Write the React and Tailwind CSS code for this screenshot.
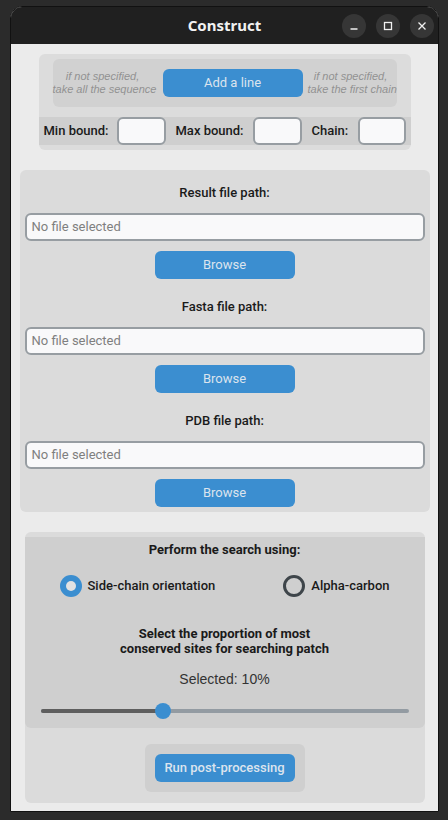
import React from "react";

const BLUE = "bg-[#3b8ed0]";

// Small entry used in the bounds row
const SmallEntry = ({ className = "" }) => (
  <div
    className={`h-[28px] rounded-[6px] border-2 border-[#979da2] bg-[#f9f9fa] ${className}`}
  ></div>
);

// One "label / entry / Browse" block of the file frame
const FileField = ({ label, first }) => (
  <div className="flex flex-col items-center">
    <div
      className={`${first ? "mt-[15px]" : "mt-[20px]"} h-[16px] text-[13px] leading-[16px] font-medium text-[#1a1a1a]`}
    >
      {label}
    </div>
    <div className="mt-[12px] flex h-[28px] w-full items-center rounded-[6px] border-2 border-[#979da2] bg-[#f9f9fa] px-[5px] text-[13px] text-[#7f7f7f]">
      No file selected
    </div>
    <button
      className={`mt-[10px] h-[28px] w-[140px] rounded-[6px] ${BLUE} text-[13px] text-[#dce4ee]`}
    >
      Browse
    </button>
  </div>
);

const TitleButton = ({ children }) => (
  <div className="flex h-[24px] w-[24px] items-center justify-center rounded-full bg-[#363636]">
    {children}
  </div>
);

export default function App() {
  const percent = 0.334;

  return (
    <div
      className="h-[820px] w-[448px] overflow-hidden bg-[#2b2b2b] pt-[6px]"
      style={{ fontFamily: "Roboto, 'Noto Sans', sans-serif" }}
    >
      <div className="ml-[10px] flex h-[806px] w-[429px] flex-col overflow-hidden rounded-t-[12px] border border-[#111111] bg-[#ebebeb]">
        {/* Title bar */}
        <div className="relative flex h-[37px] shrink-0 items-center justify-center bg-[#202020]">
          <span
            className="text-[15px] font-bold text-[#f2f2f2]"
            style={{ fontFamily: "'Noto Sans', sans-serif" }}
          >
            Construct
          </span>
          <div className="absolute right-[4px] top-[7px] flex gap-[10px]">
            <TitleButton>
              <svg width="10" height="10" viewBox="0 0 10 10">
                <path d="M1.5 8h7" stroke="#f0f0f0" strokeWidth="1.3" />
              </svg>
            </TitleButton>
            <TitleButton>
              <svg width="10" height="10" viewBox="0 0 10 10">
                <rect x="1.5" y="1.5" width="7" height="7" fill="none" stroke="#f0f0f0" strokeWidth="1.3" />
              </svg>
            </TitleButton>
            <TitleButton>
              <svg width="10" height="10" viewBox="0 0 10 10">
                <path d="M1.5 1.5l7 7M8.5 1.5l-7 7" stroke="#f0f0f0" strokeWidth="1.3" />
              </svg>
            </TitleButton>
          </div>
        </div>

        {/* Content */}
        <div className="flex flex-col items-center">
          {/* Bounds frame */}
          <div className="mt-[10px] w-[372px] rounded-[6px] bg-[#dcdcdc] pb-[5px] pt-[5px]">
            <div className="mx-[14px] flex h-[48px] items-center rounded-[6px] bg-[#d1d1d1]">
              <div
                className="w-[100px] whitespace-nowrap text-center text-[11px] italic leading-[13px] text-[#929292]"
                style={{ fontFamily: "'Liberation Sans', Arial, sans-serif" }}
              >
                if not specified,
                <br />
                take all the sequence
              </div>
              <button
                className={`ml-[10px] h-[28px] w-[140px] rounded-[6px] ${BLUE} text-[13px] text-[#dce4ee]`}
              >
                Add a line
              </button>
              <div
                className="ml-[5px] w-[86px] whitespace-nowrap text-center text-[11px] italic leading-[13px] text-[#929292]"
                style={{ fontFamily: "'Liberation Sans', Arial, sans-serif" }}
              >
                if not specified,
                <br />
                take the first chain
              </div>
            </div>
            <div className="mt-[10px] flex h-[28px] items-center bg-[#cfcfcf] pl-[5px] text-[13px] font-medium text-[#1a1a1a]">
              <span className="w-[73px]">Min bound:</span>
              <SmallEntry className="w-[49px]" />
              <span className="ml-[10px] w-[77px]">Max bound:</span>
              <SmallEntry className="w-[49px]" />
              <span className="ml-[10px] w-[46px]">Chain:</span>
              <SmallEntry className="w-[48px]" />
            </div>
          </div>

          {/* Files frame */}
          <div className="mt-[20px] w-[410px] rounded-[6px] bg-[#dbdbdb] px-[5px] pb-[5px]">
            <FileField label="Result file path:" first />
            <FileField label="Fasta file path:" />
            <FileField label="PDB file path:" />
          </div>

          {/* Search frame */}
          <div className="mt-[20px] w-[400px] rounded-[6px] bg-[#dbdbdb] pb-[11px] pt-[5px]">
            <div className="flex flex-col items-center rounded-b-[6px] bg-[#cfcfcf] pb-[8px] pt-[5px]">
              <div className="h-[16px] text-[13px] font-bold leading-[16px] text-[#1a1a1a]">
                Perform the search using:
              </div>
              <div className="mt-[17px] flex h-[22px] w-full items-center justify-between px-[35px] text-[13px] font-medium text-[#1a1a1a]">
                <div className="flex items-center gap-[6px]">
                  <div className="flex h-[22px] w-[22px] items-center justify-center rounded-full bg-[#3b8ed0]">
                    <div className="h-[10px] w-[10px] rounded-full bg-[#e2e2e2]"></div>
                  </div>
                  <span>Side-chain orientation</span>
                </div>
                <div className="flex items-center gap-[6px]">
                  <div className="h-[22px] w-[22px] rounded-full border-[3px] border-[#3e454a]"></div>
                  <span>Alpha-carbon</span>
                </div>
              </div>
              <div className="mt-[29px] text-center text-[13px] font-bold leading-[15px] text-[#1a1a1a]">
                Select the proportion of most
                <br />
                conserved sites for searching patch
              </div>
              <div
                className="mt-[15px] h-[16px] text-[14px] leading-[16px] text-[#333333]"
                style={{ fontFamily: "'Liberation Sans', Arial, sans-serif" }}
              >
                Selected: 10%
              </div>
              <div className="mt-[15px] flex h-[18px] w-full items-center px-[16px]">
                <div className="relative h-[4px] w-full rounded-full bg-[#939ba2]">
                  <div
                    className="absolute left-0 top-0 h-[4px] rounded-full bg-[#5e5e5e]"
                    style={{ width: `${percent * 100}%` }}
                  ></div>
                  <div
                    className="absolute top-[-6px] h-[16px] w-[16px] -translate-x-1/2 rounded-full bg-[#3b8ed0]"
                    style={{ left: `${percent * 100}%` }}
                  ></div>
                </div>
              </div>
            </div>
            <div className="mx-auto mt-[16px] w-[160px] rounded-[6px] bg-[#cfcfcf] p-[10px]">
              <button
                className={`h-[28px] w-[140px] rounded-[6px] ${BLUE} text-[13px] font-medium text-[#dce4ee]`}
              >
                Run post-processing
              </button>
            </div>
          </div>
        </div>
      </div>
    </div>
  );
}
